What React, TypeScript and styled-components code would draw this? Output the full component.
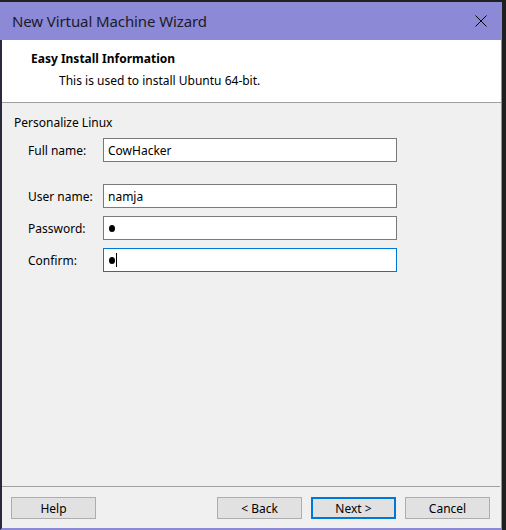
import React from "react";
import styled, { createGlobalStyle } from "styled-components";

const Global = createGlobalStyle`
  html, body { margin: 0; padding: 0; background: #1f1f1f; }
  body { width: 506px; height: 530px; overflow: hidden; font-family: "Noto Sans", "Open Sans", "DejaVu Sans", sans-serif; }
  * { box-sizing: border-box; }
`;

const Screen = styled.div`
  width: 506px;
  height: 530px;
  padding-top: 2px;
  background: #1f1f1f;
`;

const Window = styled.div`
  width: 502px;
  height: 528px;
  display: flex;
  flex-direction: column;
  background: #f0f0f0;
  border-left: 2px solid #2a2a3e;
  border-right: 1px solid #8c89d6;
  border-bottom: 2px solid #8c89d6;
`;

const TitleBar = styled.div`
  height: 38px;
  flex: none;
  display: flex;
  align-items: center;
  justify-content: space-between;
  background: #8c89d6;
  padding-left: 10px;
  padding-right: 14px;
  margin-left: -2px;
  padding-left: 12px;
`;

const Title = styled.div`
  font-size: 15px;
  color: #1b1b2a;
  letter-spacing: -0.1px;
`;

const Close = styled.div`
  width: 12px;
  height: 12px;
  display: flex;
`;

const Header = styled.div`
  height: 63px;
  flex: none;
  background: #ffffff;
  border-bottom: 1px solid #a0a0a0;
  padding: 10px 0 0 29px;
  display: flex;
  flex-direction: column;
  gap: 5px;
`;

const HeaderTitle = styled.div`
  font-size: 12px;
  font-weight: 700;
  color: #000;
`;

const HeaderSub = styled.div`
  font-size: 12px;
  color: #000;
  padding-left: 28px;
`;

const Body = styled.div`
  flex: 1;
  padding: 11px 0 0 12px;
  display: flex;
  flex-direction: column;
`;

const Group = styled.div`
  font-size: 12px;
  color: #000;
  margin-bottom: 7px;
`;

const Form = styled.div`
  display: flex;
  flex-direction: column;
  padding-left: 14px;
`;

const Row = styled.div<{ $gap: number }>`
  display: flex;
  align-items: center;
  margin-bottom: ${(p) => p.$gap}px;
`;

const Label = styled.label`
  width: 75px;
  font-size: 12px;
  color: #000;
`;

const Field = styled.div<{ $focus?: boolean }>`
  width: 294px;
  height: 24px;
  background: #fff;
  border: 1px solid ${(p) => (p.$focus ? "#0078d7" : "#7a7a7a")};
  display: flex;
  align-items: center;
  padding-left: 4px;
  font-size: 12px;
  color: #000;
`;

const Dot = styled.span`
  display: inline-block;
  width: 6px;
  height: 7px;
  border-radius: 50%;
  background: #000;
  margin-left: 1px;
`;

const Caret = styled.span`
  display: inline-block;
  width: 1px;
  height: 14px;
  background: #000;
  margin-left: 1px;
`;

const Footer = styled.div`
  flex: none;
  height: 42px;
  border-top: 1px solid #a0a0a0;
  margin-right: 1px;
  display: flex;
  align-items: flex-start;
  padding: 10px 0 0 9px;
`;

const Button = styled.button<{ $primary?: boolean; $ml?: number }>`
  width: 85px;
  height: 22px;
  margin-left: ${(p) => p.$ml ?? 0}px;
  background: #e1e1e1;
  border: ${(p) => (p.$primary ? "2px solid #0078d7" : "1px solid #adadad")};
  font-family: inherit;
  font-size: 12px;
  color: #000;
  padding: 0;
  display: flex;
  align-items: center;
  justify-content: center;
`;

export default function App() {
  return (
    <>
      <Global />
      <Screen>
        <Window>
          <TitleBar>
            <Title>New Virtual Machine Wizard</Title>
            <Close>
              <svg width="12" height="12" viewBox="0 0 12 12">
                <path d="M0.5 0.5 L11.5 11.5 M11.5 0.5 L0.5 11.5" stroke="#000" strokeWidth="1" />
              </svg>
            </Close>
          </TitleBar>
          <Header>
            <HeaderTitle>Easy Install Information</HeaderTitle>
            <HeaderSub>This is used to install Ubuntu 64-bit.</HeaderSub>
          </Header>
          <Body>
            <Group>Personalize Linux</Group>
            <Form>
              <Row $gap={22}>
                <Label>Full name:</Label>
                <Field>CowHacker</Field>
              </Row>
              <Row $gap={8}>
                <Label>User name:</Label>
                <Field>namja</Field>
              </Row>
              <Row $gap={8}>
                <Label>Password:</Label>
                <Field>
                  <Dot />
                </Field>
              </Row>
              <Row $gap={0}>
                <Label>Confirm:</Label>
                <Field $focus>
                  <Dot />
                  <Caret />
                </Field>
              </Row>
            </Form>
          </Body>
          <Footer>
            <Button>Help</Button>
            <Button $ml={121}>&lt; Back</Button>
            <Button $primary $ml={9}>Next &gt;</Button>
            <Button $ml={9}>Cancel</Button>
          </Footer>
        </Window>
      </Screen>
    </>
  );
}
